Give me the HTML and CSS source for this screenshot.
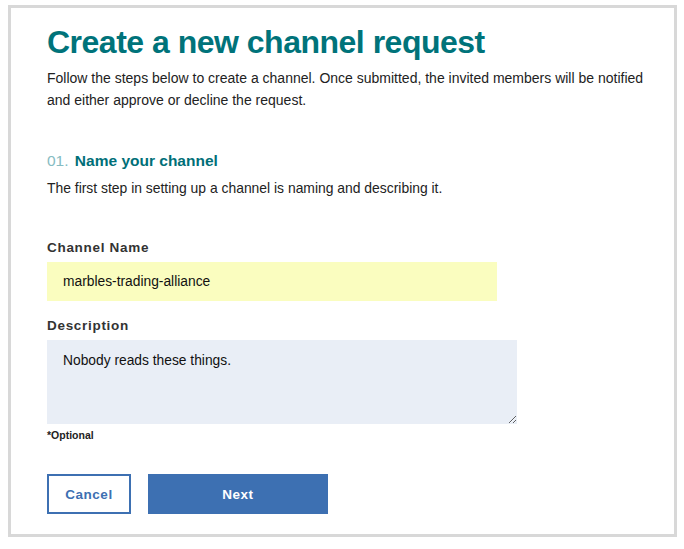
FILE: index.html
```html
<!DOCTYPE html>
<html>
<head>
<meta charset="utf-8">
<link rel="stylesheet" href="styles.css">
</head>
<body>
<div class="frame">
  <h1 class="title">Create a new channel request</h1>
  <p class="intro">Follow the steps below to create a channel. Once submitted, the invited members will be notified and either approve or decline the request.</p>

  <h2 class="step"><span class="step-num">01.</span> Name your channel</h2>
  <p class="step-desc">The first step in setting up a channel is naming and describing it.</p>

  <div class="field">
    <label class="label">Channel Name</label>
    <div class="input">marbles-trading-alliance</div>
  </div>

  <div class="field field-desc">
    <label class="label">Description</label>
    <textarea class="textarea">Nobody reads these things.</textarea>
    <div class="optional">*Optional</div>
  </div>

  <div class="actions">
    <button class="btn btn-cancel">Cancel</button>
    <button class="btn btn-next">Next</button>
  </div>
</div>
</body>
</html>
```
FILE: styles.css
```css
html, body {
  margin: 0;
  padding: 0;
  background: #ffffff;
}
body {
  font-family: "Liberation Sans", Arial, sans-serif;
  color: #222;
}
.frame {
  margin: 5px 7px 0 8px;
  height: 532px;
  box-sizing: border-box;
  border: 3px solid #d8d8d8;
  padding: 14px 20px 0 36px;
}
.title {
  margin: 0;
  font-size: 32px;
  font-weight: bold;
  color: #00737a;
  letter-spacing: -0.5px;
  line-height: 40px;
}
.intro {
  margin: 5px 0 0;
  font-size: 14px;
  line-height: 22px;
  color: #222;
}
.step {
  margin: 40px 0 0;
  font-size: 15.5px;
  font-weight: bold;
  color: #006f78;
  line-height: 20px;
}
.step-num {
  color: #86bcc2;
  font-weight: normal;
  margin-right: 2px;
}
.step-desc {
  margin: 7px 0 0;
  font-size: 13.9px;
  line-height: 20px;
  color: #222;
}
.field {
  margin-top: 41px;
  display: flex;
  flex-direction: column;
}
.field-desc {
  margin-top: 16px;
}
.label {
  font-size: 13.5px;
  font-weight: bold;
  color: #333;
  letter-spacing: 0.7px;
  line-height: 18px;
  margin-bottom: 5px;
}
.input {
  width: 450px;
  height: 39px;
  box-sizing: border-box;
  background: #fafdbf;
  padding: 0 16px;
  font-size: 13.8px;
  line-height: 39px;
  color: #111;
}
.textarea {
  width: 470px;
  height: 84px;
  box-sizing: border-box;
  background: #e9eef6;
  border: none;
  margin: 0;
  padding: 12px 16px;
  font-family: "Liberation Sans", Arial, sans-serif;
  font-size: 13.8px;
  line-height: 18px;
  color: #111;
  resize: vertical;
  display: block;
}
.optional {
  margin-top: 4px;
  font-size: 10.5px;
  font-weight: bold;
  color: #222;
  line-height: 14px;
}
.actions {
  margin-top: 32px;
  display: flex;
  gap: 17px;
}
.btn {
  height: 40px;
  box-sizing: border-box;
  font-family: "Liberation Sans", Arial, sans-serif;
  font-size: 13.5px;
  font-weight: bold;
  letter-spacing: 0.5px;
  padding: 0;
  margin: 0;
}
.btn-cancel {
  width: 84px;
  background: #fff;
  border: 2px solid #3d70b2;
  color: #3d70b2;
}
.btn-next {
  width: 180px;
  background: #3d70b2;
  border: none;
  color: #fff;
}
```
